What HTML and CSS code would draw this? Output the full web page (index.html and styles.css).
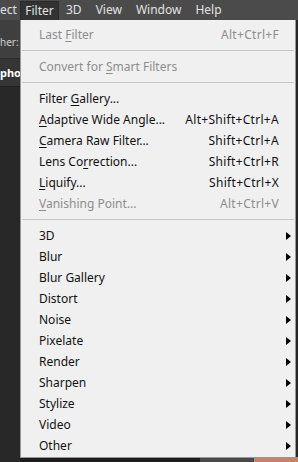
FILE: index.html
```html
<!DOCTYPE html>
<html lang="en">
<head>
    <meta charset="UTF-8">
    <meta name="viewport" content="width=device-width, initial-scale=1.0">
    <title>Filter menu</title>
    <link rel="stylesheet" href="styles.css">
</head>
<body>

    <div class="menubar">
        <span class="menubar-item cut">ect</span>
        <span class="menubar-item open">Filter</span>
        <span class="menubar-item">3D</span>
        <span class="menubar-item">View</span>
        <span class="menubar-item">Window</span>
        <span class="menubar-item">Help</span>
    </div>

    <div class="workspace">
        <div class="side">
            <div class="side-options">her:</div>
            <div class="side-tab">pho</div>
            <div class="side-rest"></div>
        </div>
        <div class="canvas">
            <div class="canvas-bottom">
                <span class="strip dark"></span>
                <span class="strip grey"></span>
                <span class="strip photo"></span>
            </div>
        </div>

        <div class="dropdown">
            <div class="item disabled">
                <span class="label">Last <u>F</u>ilter</span>
                <span class="shortcut">Alt+Ctrl+F</span>
                <span class="arrow-slot"></span>
            </div>
            <div class="sep"></div>
            <div class="item disabled">
                <span class="label">Convert for <u>S</u>mart Filters</span>
                <span class="shortcut"></span>
                <span class="arrow-slot"></span>
            </div>
            <div class="sep"></div>
            <div class="item">
                <span class="label">Filter <u>G</u>allery...</span>
                <span class="shortcut"></span>
                <span class="arrow-slot"></span>
            </div>
            <div class="item">
                <span class="label"><u>A</u>daptive Wide Angle...</span>
                <span class="shortcut">Alt+Shift+Ctrl+A</span>
                <span class="arrow-slot"></span>
            </div>
            <div class="item">
                <span class="label"><u>C</u>amera Raw Filter...</span>
                <span class="shortcut">Shift+Ctrl+A</span>
                <span class="arrow-slot"></span>
            </div>
            <div class="item">
                <span class="label">Lens Co<u>r</u>rection...</span>
                <span class="shortcut">Shift+Ctrl+R</span>
                <span class="arrow-slot"></span>
            </div>
            <div class="item">
                <span class="label"><u>L</u>iquify...</span>
                <span class="shortcut">Shift+Ctrl+X</span>
                <span class="arrow-slot"></span>
            </div>
            <div class="item disabled">
                <span class="label"><u>V</u>anishing Point...</span>
                <span class="shortcut">Alt+Ctrl+V</span>
                <span class="arrow-slot"></span>
            </div>
            <div class="sep"></div>
            <div class="item sub"><span class="label">3D</span><span class="shortcut"></span><span class="arrow-slot"><i class="arrow"></i></span></div>
            <div class="item sub"><span class="label">Blur</span><span class="shortcut"></span><span class="arrow-slot"><i class="arrow"></i></span></div>
            <div class="item sub"><span class="label">Blur Gallery</span><span class="shortcut"></span><span class="arrow-slot"><i class="arrow"></i></span></div>
            <div class="item sub"><span class="label">Distort</span><span class="shortcut"></span><span class="arrow-slot"><i class="arrow"></i></span></div>
            <div class="item sub"><span class="label">Noise</span><span class="shortcut"></span><span class="arrow-slot"><i class="arrow"></i></span></div>
            <div class="item sub"><span class="label">Pixelate</span><span class="shortcut"></span><span class="arrow-slot"><i class="arrow"></i></span></div>
            <div class="item sub"><span class="label">Render</span><span class="shortcut"></span><span class="arrow-slot"><i class="arrow"></i></span></div>
            <div class="item sub"><span class="label">Sharpen</span><span class="shortcut"></span><span class="arrow-slot"><i class="arrow"></i></span></div>
            <div class="item sub"><span class="label">Stylize</span><span class="shortcut"></span><span class="arrow-slot"><i class="arrow"></i></span></div>
            <div class="item sub"><span class="label">Video</span><span class="shortcut"></span><span class="arrow-slot"><i class="arrow"></i></span></div>
            <div class="item sub"><span class="label">Other</span><span class="shortcut"></span><span class="arrow-slot"><i class="arrow"></i></span></div>
        </div>
    </div>

</body>
</html>
```

FILE: styles.css
```css
body {
    margin: 0;
    padding: 0;
    width: 298px;
    height: 462px;
    overflow: hidden;
    font-family: 'Noto Sans', 'Open Sans', sans-serif;
    font-size: 12px;
    background-color: #282828;
}

.menubar {
    display: flex;
    height: 20px;
    background-color: #4b4b4b;
    color: #e2e2e2;
    font-size: 12px;
    line-height: 20px;
    white-space: nowrap;
}

.menubar-item {
    padding: 0 7px;
}

.menubar-item.cut {
    width: 12px;
    padding: 0 8px 0 0;
    text-align: right;
}

.menubar-item.open {
    width: 29px;
    text-align: center;
    background-color: #323232;
    border: 1px solid #2a2a2a;
    border-bottom: none;
    height: 18px;
    line-height: 18px;
    margin-top: 1px;
    padding: 0 4px;
}

.workspace {
    position: relative;
    display: flex;
    height: 442px;
}

.side {
    width: 20px;
    display: flex;
    flex-direction: column;
}

.side-options {
    height: 38px;
    background-color: #3f3f3f;
    color: #d0d0d0;
    font-size: 10px;
    line-height: 44px;
    white-space: nowrap;
    border-bottom: 1px solid #2a2a2a;
}

.side-tab {
    height: 27px;
    background-color: #353535;
    color: #fff;
    font-weight: bold;
    font-size: 11px;
    line-height: 27px;
    white-space: nowrap;
    border-bottom: 1px solid #1e1e1e;
}

.side-rest {
    flex: 1;
    background-color: #282828;
}

.canvas {
    flex: 1;
    display: flex;
    flex-direction: column;
    justify-content: flex-end;
    background-color: #262626;
}

.canvas-bottom {
    display: flex;
    height: 5px;
}

.strip.dark {
    width: 180px;
    background-color: #1c1c1c;
}

.strip.grey {
    width: 54px;
    background-color: #4a4a4a;
}

.strip.photo {
    flex: 1;
    background-color: #c58266;
}

/* the open Filter menu, dropped over the workspace */
.dropdown {
    position: absolute;
    top: 0;
    left: 20px;
    width: 274px;
    padding: 4px 0 1px;
    background-color: #f0f0f0;
    border: 1px solid #979797;
    border-top: none;
    color: #111;
}

.item {
    display: grid;
    grid-template-columns: 1fr auto 16px;
    height: 21px;
    line-height: 21px;
    padding-left: 18px;
    white-space: nowrap;
}

.item u {
    text-underline-offset: 2px;
}

.item.disabled {
    color: #8d8d8d;
}

.shortcut {
    text-align: right;
    letter-spacing: 0.3px;
}

.arrow-slot {
    display: flex;
    align-items: center;
    padding-left: 7px;
}

.arrow {
    width: 0;
    height: 0;
    border-left: 5px solid #000;
    border-top: 4px solid transparent;
    border-bottom: 4px solid transparent;
}

.sep {
    height: 11px;
    display: flex;
    align-items: center;
    padding: 0 1px;
}

.sep::after {
    content: "";
    flex: 1;
    height: 1px;
    background-color: #c6c6c6;
}
```
